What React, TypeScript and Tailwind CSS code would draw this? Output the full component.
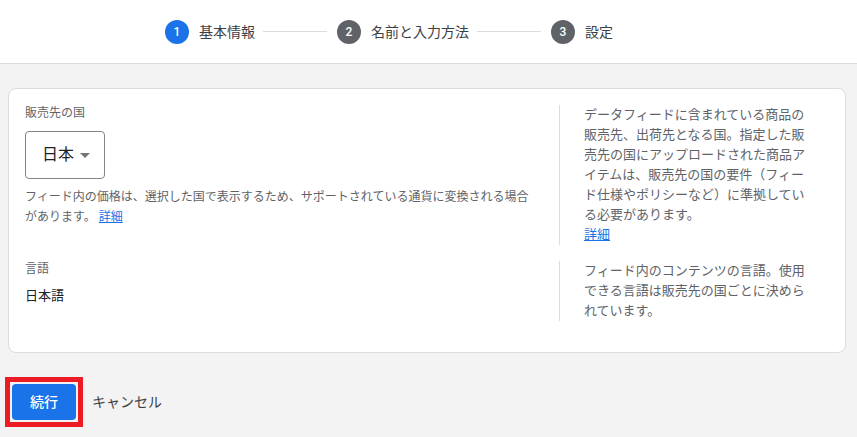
const font = "font-['Roboto','Noto_Sans_CJK_JP',sans-serif]";

const steps = [
  { n: 1, label: "基本情報", active: true },
  { n: 2, label: "名前と入力方法", active: false },
  { n: 3, label: "設定", active: false },
];

function Stepper() {
  return (
    <div className="flex h-16 items-center border-b border-[#dadce0] bg-white pl-[165px]">
      {steps.map((s, i) => (
        <div key={s.n} className="flex items-center">
          <div
            className={
              "flex h-6 w-6 items-center justify-center rounded-full text-[12px] font-medium text-white " +
              (s.active ? "bg-[#1a73e8]" : "bg-[#5f6368]")
            }
          >
            {s.n}
          </div>
          <span className="ml-2.5 text-[14px] leading-5 text-[#3c4043]">{s.label}</span>
          {i < steps.length - 1 && <div className="mx-2 mr-2.5 h-px w-16 bg-[#dadce0]" />}
        </div>
      ))}
    </div>
  );
}

function Row({ left, right }: { left: React.ReactNode; right: React.ReactNode }) {
  return (
    <div className="flex">
      <div className="flex-1 pr-6">{left}</div>
      <div className="w-[286px] border-l border-[#dadce0] pl-6 pr-8 text-[13px] leading-5 text-[#5f6368]">
        {right}
      </div>
    </div>
  );
}

export default function App() {
  return (
    <div className={"min-h-screen bg-[#f3f3f3] " + font}>
      <Stepper />
      <div className="ml-2 mr-[11px] mt-6 rounded-lg border border-[#dadce0] bg-white pb-[31px] pl-4 pt-4">
        <div className="flex flex-col gap-4">
          <Row
            left={
              <div>
                <div className="text-[12px] leading-4 text-[#5f6368]">販売先の国</div>
                <div className="mt-2.5 flex h-12 w-20 items-center rounded border border-[#80868b] pl-4">
                  <span className="text-[16px] leading-6 text-[#202124]">日本</span>
                  <span className="ml-1.5 h-0 w-0 border-x-[5px] border-t-[5px] border-x-transparent border-t-[#757575]" />
                </div>
                <p className="mt-2 text-[12px] leading-5 text-[#5f6368]">
                  フィード内の価格は、選択した国で表示するため、サポートされている通貨に変換される場合があります。{" "}
                  <a className="text-[#1a73e8] underline">詳細</a>
                </p>
              </div>
            }
            right={
              <>
                <p>
                  データフィードに含まれている商品の販売先、出荷先となる国。指定した販売先の国にアップロードされた商品アイテムは、販売先の国の要件（フィード仕様やポリシーなど）に準拠している必要があります。
                </p>
                <a className="text-[#1a73e8] underline">詳細</a>
              </>
            }
          />
          <Row
            left={
              <div>
                <div className="text-[12px] leading-4 text-[#5f6368]">言語</div>
                <div className="mt-[9px] text-[13px] leading-5 text-[#202124]">日本語</div>
              </div>
            }
            right={
              <p>フィード内のコンテンツの言語。使用できる言語は販売先の国ごとに決められています。</p>
            }
          />
        </div>
      </div>
      <div className="mt-6 flex items-center pl-[5px]">
        <div className="border-[5px] border-[#ed1c24] p-0.5">
          <button className="flex h-9 w-16 items-center justify-center rounded bg-[#1a73e8] text-[14px] font-medium text-white">
            続行
          </button>
        </div>
        <button className="ml-[9px] text-[14px] leading-5 text-[#3c4043]">キャンセル</button>
      </div>
    </div>
  );
}
